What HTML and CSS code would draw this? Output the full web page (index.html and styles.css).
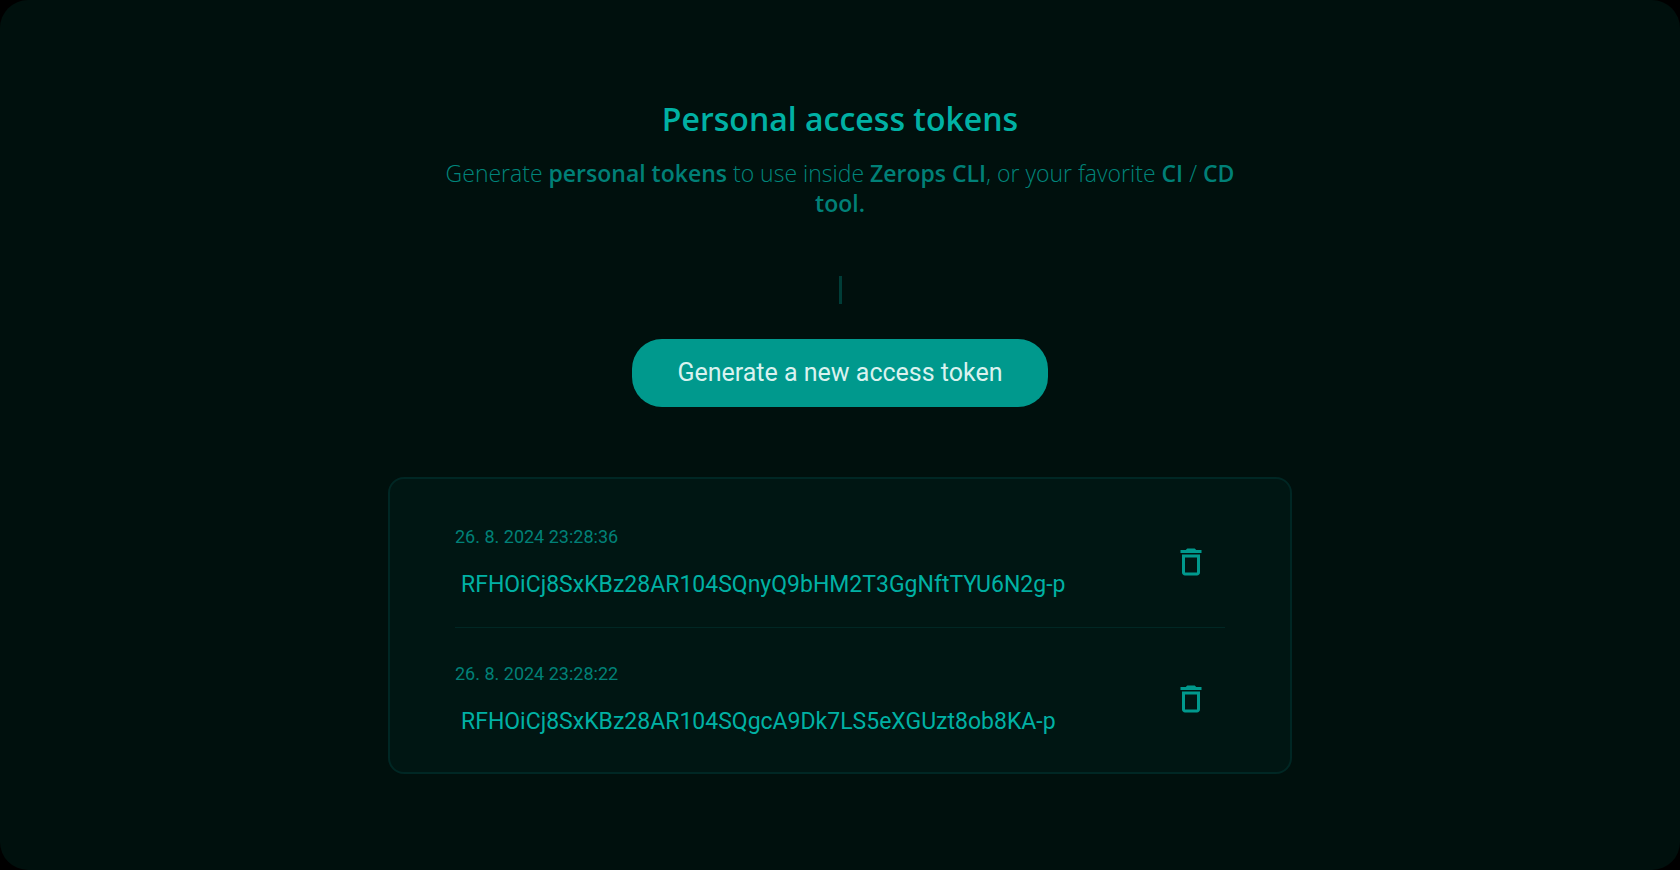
FILE: index.html
```html
<!DOCTYPE html>
<html lang="en">
<head>
<meta charset="utf-8">
<title>Personal access tokens</title>
<link rel="stylesheet" href="styles.css">
</head>
<body>
<main class="page">
  <h1 class="title">Personal access tokens</h1>
  <p class="intro">Generate <strong>personal tokens</strong> to use inside <strong>Zerops CLI</strong>, or your favorite <strong>CI</strong> / <strong>CD tool.</strong></p>
  <div class="divider"></div>
  <button class="generate" type="button">Generate a new access token</button>
  <ul class="tokens">
    <li class="token">
      <div class="token-info">
        <time class="token-date">26. 8. 2024 23:28:36</time>
        <span class="token-value">RFHOiCj8SxKBz28AR104SQnyQ9bHM2T3GgNftTYU6N2g-p</span>
      </div>
      <button class="delete" type="button" aria-label="Delete token">
        <svg class="icon" viewBox="0 0 24 24"><path d="M16 9v10H8V9h8m-1.500-6h-5l-1 1H5v2h14V4h-3.500l-1-1zM18 7H6v12c0 1.100.9 2 2 2h8c1.100 0 2-.9 2-2V7z"/></svg>
      </button>
    </li>
    <li class="token">
      <div class="token-info">
        <time class="token-date">26. 8. 2024 23:28:22</time>
        <span class="token-value">RFHOiCj8SxKBz28AR104SQgcA9Dk7LS5eXGUzt8ob8KA-p</span>
      </div>
      <button class="delete" type="button" aria-label="Delete token">
        <svg class="icon" viewBox="0 0 24 24"><path d="M16 9v10H8V9h8m-1.500-6h-5l-1 1H5v2h14V4h-3.500l-1-1zM18 7H6v12c0 1.100.9 2 2 2h8c1.100 0 2-.9 2-2V7z"/></svg>
      </button>
    </li>
  </ul>
</main>
</body>
</html>
```
FILE: styles.css
```css
* { box-sizing: border-box; }
body { margin: 0; background: #000; font-family: Roboto, sans-serif; }
.page {
  min-height: 100vh;
  padding: 96px 24px;
  display: flex;
  flex-direction: column;
  align-items: center;
  background: #00100d;
  border-radius: 28px;
}
.title { margin: 0; font: 600 32px/46px "Open Sans", sans-serif; color: #00b1a4; text-align: center; }
.intro { margin: 16px 0 0; max-width: 800px; font: 300 23px/30px "Open Sans", sans-serif; color: #00857b; text-align: center; }
.intro strong { font-weight: 600; color: #008077; }
.divider { width: 3px; height: 28px; margin: 58px 0 35px; background: #003d37; }
.generate {
  padding: 0 45px;
  height: 68px;
  border: 0;
  border-radius: 30px;
  background: #00998d;
  color: #d9f2ef;
  font: 400 25px/68px Roboto, sans-serif;
}
.tokens {
  width: 100%;
  max-width: 904px;
  margin: 70px 0 0;
  padding: 12px 65px 8px;
  list-style: none;
  background: #001613;
  border: 2px solid #002724;
  border-radius: 16px;
}
.token { display: flex; align-items: center; justify-content: space-between; padding: 35px 16px 27px 0; }
.token + .token { border-top: 1px solid #002724; }
.token-info { display: flex; flex-direction: column; gap: 22px; }
.token-date { font-size: 18px; line-height: 22px; color: #008077; }
.token-value { padding-left: 6px; font-size: 23px; line-height: 30px; color: #00b1a4; }
.delete { padding: 0 0 2px; border: 0; background: none; color: #00998d; }
.icon { display: block; width: 36px; height: 36px; fill: currentColor; }
```
